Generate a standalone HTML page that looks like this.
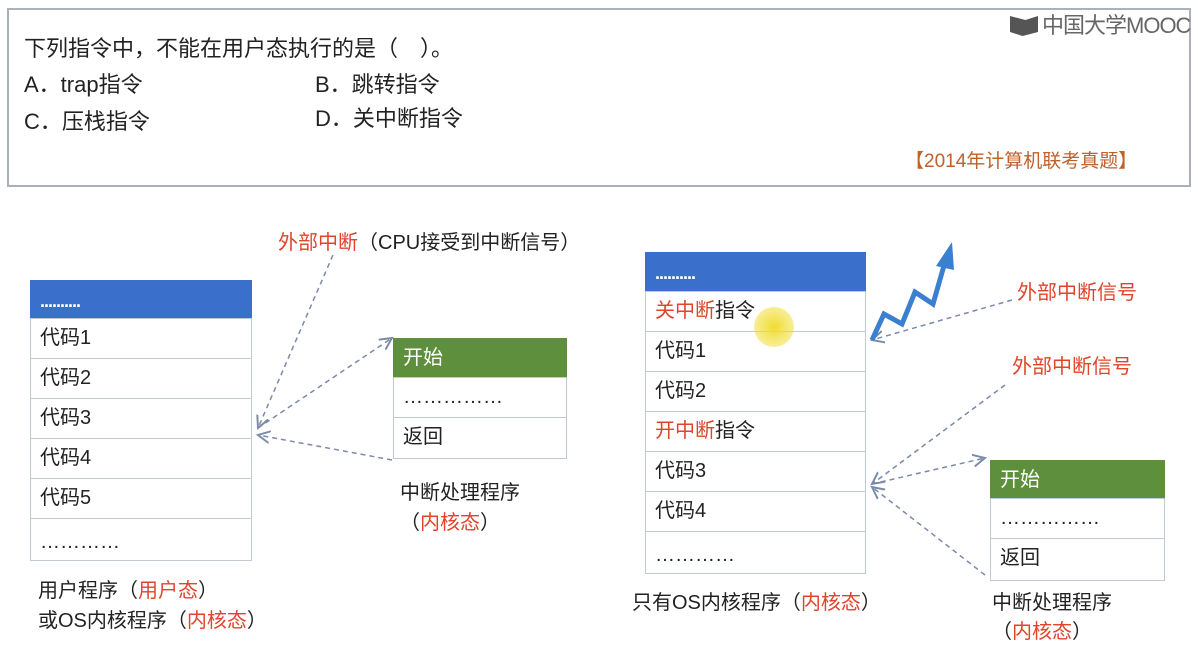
<!DOCTYPE html>
<html><head><meta charset="utf-8"><style>
body{margin:0;width:1198px;height:664px;background:#fff;position:relative;overflow:hidden;font-family:"Liberation Sans","Noto Sans CJK SC",sans-serif;color:#222}
.a{position:absolute;white-space:nowrap}
.q{font-size:22px}
.r{color:#e0442c}
.box{position:absolute;border:1px solid #9aa;}
.row{position:absolute;border:1px solid #c2c8d4;box-sizing:border-box;font-size:20px;padding-left:9px;line-height:38px}
.blue{background:#3a6fcb;color:#fff;border-color:#3a6fcb;font-size:18px;font-weight:bold;line-height:40px;letter-spacing:-1px}
.green{background:#5e8f3c;color:#fff;border-color:#5e8f3c}
.lbl{font-size:20px;line-height:30px}
</style></head><body>
<div class="box" style="left:7px;top:8px;width:1180px;height:175px;border:2px solid #a9b1bb"></div>
<div class="a q" style="left:24px;top:31px">下列指令中，不能在用户态执行的是（　）。</div>
<div class="a q" style="left:24px;top:67px">A．trap指令</div>
<div class="a q" style="left:315px;top:67px">B．跳转指令</div>
<div class="a q" style="left:24px;top:104px">C．压栈指令</div>
<div class="a q" style="left:315px;top:101px">D．关中断指令</div>
<div class="a" style="left:1010px;top:8px;font-size:22px;color:#666;letter-spacing:-1px"><span style="display:inline-block;width:28px;height:20px;background:#555;vertical-align:-3px;margin-right:4px;clip-path:polygon(0 0,55% 20%,100% 0,100% 80%,45% 100%,0 80%)"></span>中国大学MOOC</div>
<div class="a" style="left:905px;top:146px;font-size:19px;color:#c0602a">【2014年计算机联考真题】</div>

<!-- left table -->
<div class="row blue" style="left:30px;top:280px;width:222px;height:39px">..........</div>
<div class="row" style="left:30px;top:318px;width:222px;height:41px">代码1</div>
<div class="row" style="left:30px;top:358px;width:222px;height:41px">代码2</div>
<div class="row" style="left:30px;top:398px;width:222px;height:41px">代码3</div>
<div class="row" style="left:30px;top:438px;width:222px;height:41px">代码4</div>
<div class="row" style="left:30px;top:478px;width:222px;height:41px">代码5</div>
<div class="row" style="left:30px;top:518px;width:222px;height:43px;line-height:46px">…………</div>
<div class="a lbl" style="left:38px;top:576px">用户程序（<span class="r">用户态</span>）</div>
<div class="a lbl" style="left:38px;top:606px">或OS内核程序（<span class="r">内核态</span>）</div>
<div class="a lbl" style="left:278px;top:228px"><span class="r">外部中断</span>（CPU接受到中断信号）</div>

<div class="row green" style="left:393px;top:338px;width:174px;height:40px">开始</div>
<div class="row" style="left:393px;top:377px;width:174px;height:41px">……………</div>
<div class="row" style="left:393px;top:417px;width:174px;height:42px">返回</div>
<div class="a lbl" style="left:400px;top:478px">中断处理程序</div>
<div class="a lbl" style="left:400px;top:508px">（<span class="r">内核态</span>）</div>

<!-- right table -->
<div class="row blue" style="left:645px;top:252px;width:221px;height:40px">..........</div>
<div class="row" style="left:645px;top:291px;width:221px;height:41px"><span class="r">关中断</span>指令</div>
<div class="row" style="left:645px;top:331px;width:221px;height:41px">代码1</div>
<div class="row" style="left:645px;top:371px;width:221px;height:41px">代码2</div>
<div class="row" style="left:645px;top:411px;width:221px;height:41px"><span class="r">开中断</span>指令</div>
<div class="row" style="left:645px;top:451px;width:221px;height:41px">代码3</div>
<div class="row" style="left:645px;top:491px;width:221px;height:41px">代码4</div>
<div class="row" style="left:645px;top:531px;width:221px;height:43px;line-height:46px">…………</div>
<div class="a lbl" style="left:632px;top:588px">只有OS内核程序（<span class="r">内核态</span>）</div>
<div class="a lbl r" style="left:1017px;top:278px">外部中断信号</div>
<div class="a lbl r" style="left:1012px;top:352px">外部中断信号</div>

<div class="row green" style="left:990px;top:460px;width:175px;height:39px">开始</div>
<div class="row" style="left:990px;top:498px;width:175px;height:41px">……………</div>
<div class="row" style="left:990px;top:538px;width:175px;height:43px">返回</div>
<div class="a lbl" style="left:992px;top:588px">中断处理程序</div>
<div class="a lbl" style="left:992px;top:617px">（<span class="r">内核态</span>）</div>

<div class="a" style="left:754px;top:307px;width:40px;height:40px;border-radius:50%;background:radial-gradient(#f0dc30,rgba(243,224,58,0.3))"></div>

<svg class="a" style="left:0;top:0" width="1198" height="664">
<defs><marker id="m" markerWidth="10" markerHeight="10" refX="8" refY="5" orient="auto"><path d="M0,1 L8,5 L0,9" fill="none" stroke="#7a8aa8" stroke-width="1.3"/></marker></defs>
<g stroke="#7a8aa8" stroke-width="1.5" stroke-dasharray="5,4" fill="none" marker-end="url(#m)">
<path d="M333,255 L258,428"/>
<path d="M392,460 L258,435"/>
<path d="M258,428 L392,338"/>
<path d="M1012,300 L872,340"/>
<path d="M1005,385 L872,484"/>
<path d="M872,484 L985,458"/>
<path d="M985,575 L872,487"/>
</g>
<path d="M872,340 L884,314 L902,324 L915,292 L933,304 L945,262" stroke="#3a7fd0" stroke-width="5" fill="none" stroke-linejoin="miter"/>
<path d="M936,266 L952,242 L954,270 Z" fill="#3a7fd0"/>
</svg>
</body></html>
